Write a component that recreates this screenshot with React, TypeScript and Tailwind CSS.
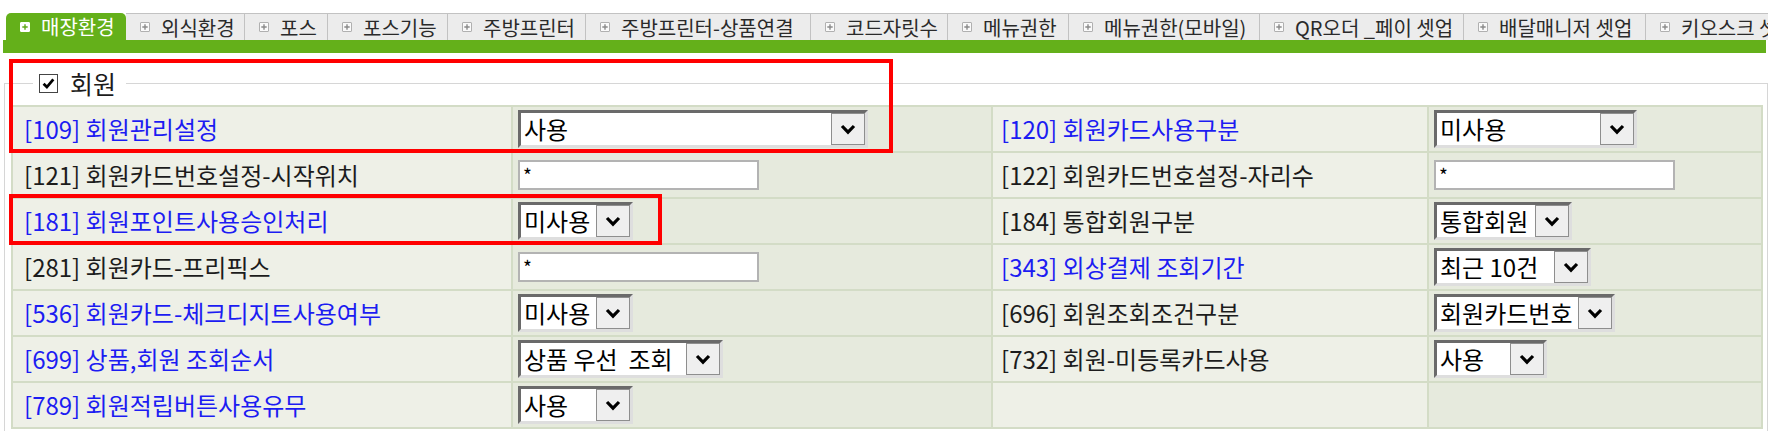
import clsx from 'clsx'

type Field =
  | { kind: 'select'; value: string; width: string }
  | { kind: 'input'; value: string }

type Setting = { code: string; label: string; link: boolean; field: Field }

const TABS: { label: string; width: string }[] = [
  { label: '매장환경', width: 'w-[120px]' },
  { label: '외식환경', width: 'w-[119px]' },
  { label: '포스', width: 'w-[83px]' },
  { label: '포스기능', width: 'w-[120px]' },
  { label: '주방프린터', width: 'w-[138px]' },
  { label: '주방프린터-상품연결', width: 'w-[225px]' },
  { label: '코드자릿수', width: 'w-[137px]' },
  { label: '메뉴권한', width: 'w-[121px]' },
  { label: '메뉴권한(모바일)', width: 'w-[191px]' },
  { label: 'QR오더 _페이 셋업', width: 'w-[204px]' },
  { label: '배달매니저 셋업', width: 'w-[182px]' },
  { label: '키오스크 셋업', width: 'w-[160px]' },
]

const ROWS: [Setting, Setting | null][] = [
  [
    { code: '109', label: '회원관리설정', link: true, field: { kind: 'select', value: '사용', width: 'w-[350px]' } },
    { code: '120', label: '회원카드사용구분', link: true, field: { kind: 'select', value: '미사용', width: 'w-[203px]' } },
  ],
  [
    { code: '121', label: '회원카드번호설정-시작위치', link: false, field: { kind: 'input', value: '*' } },
    { code: '122', label: '회원카드번호설정-자리수', link: false, field: { kind: 'input', value: '*' } },
  ],
  [
    { code: '181', label: '회원포인트사용승인처리', link: true, field: { kind: 'select', value: '미사용', width: 'w-[115px]' } },
    { code: '184', label: '통합회원구분', link: false, field: { kind: 'select', value: '통합회원', width: 'w-[138px]' } },
  ],
  [
    { code: '281', label: '회원카드-프리픽스', link: false, field: { kind: 'input', value: '*' } },
    { code: '343', label: '외상결제 조회기간', link: true, field: { kind: 'select', value: '최근 10건', width: 'w-[157px]' } },
  ],
  [
    { code: '536', label: '회원카드-체크디지트사용여부', link: true, field: { kind: 'select', value: '미사용', width: 'w-[115px]' } },
    { code: '696', label: '회원조회조건구분', link: false, field: { kind: 'select', value: '회원카드번호', width: 'w-[181px]' } },
  ],
  [
    { code: '699', label: '상품,회원 조회순서', link: true, field: { kind: 'select', value: '상품 우선  조회', width: 'w-[205px]' } },
    { code: '732', label: '회원-미등록카드사용', link: false, field: { kind: 'select', value: '사용', width: 'w-[113px]' } },
  ],
  [
    { code: '789', label: '회원적립버튼사용유무', link: true, field: { kind: 'select', value: '사용', width: 'w-[115px]' } },
    null,
  ],
]

function PlusBox({ active }: { active: boolean }) {
  return (
    <span
      className={clsx(
        'flex h-[10px] w-[10px] shrink-0 items-center justify-center rounded-[1px] border',
        active ? 'border-white bg-white' : 'border-[#b0b0b0] bg-[#fafafa]',
      )}
    >
      <svg viewBox="0 0 8 8" className="h-[8px] w-[8px]">
        <path d="M4 1.3v5.4M1.3 4h5.4" stroke={active ? '#5fa818' : '#8a8a8a'} strokeWidth="1.4" />
      </svg>
    </span>
  )
}

function Tab({ label, width, active }: { label: string; width: string; active: boolean }) {
  return (
    <div
      className={clsx(
        'flex h-[27px] shrink-0 items-center gap-[11px] pl-[14px] text-[20px] leading-[27px]',
        width,
        active
          ? 'rounded-t-[5px] bg-[#64b01a] text-white'
          : 'border-t border-r border-[#c2c2c2] bg-[#ececec] text-[#2a2a2a]',
      )}
    >
      <PlusBox active={active} />
      <span className="whitespace-pre">{label}</span>
    </div>
  )
}

function Chevron() {
  return (
    <svg viewBox="0 0 16 11" className="h-[11px] w-[16px]">
      <path d="M2 2l6 6.2L14 2" fill="none" stroke="#000" strokeWidth="3.2" />
    </svg>
  )
}

function SelectBox({ value, width }: { value: string; width: string }) {
  return (
    <div
      className={clsx(
        'flex h-[38px] items-center border-[3px] border-t-[#6a6a6a] border-r-[#dedede] border-b-[#dedede] border-l-[#6a6a6a] bg-white',
        width,
      )}
    >
      <span className="min-w-0 flex-1 pl-[3px] text-[24px] leading-[30px] whitespace-pre text-black">{value}</span>
      <span className="flex h-full w-[34px] shrink-0 items-center justify-center border border-[#8e8e8e] bg-[#efefef]">
        <Chevron />
      </span>
    </div>
  )
}

function TextBox({ value }: { value: string }) {
  return (
    <div className="h-[30px] w-[241px] border-2 border-[#b3b3b3] bg-white pl-[3px] text-[19px] leading-[26px] text-black">
      {value}
    </div>
  )
}

function LabelCell({ s, first }: { s: Setting | null; first: boolean }) {
  return (
    <td
      className={clsx(
        'h-[46px] border-2 border-[#d3dcc6] bg-[#eef0e7] align-middle text-[24px] leading-[30px] whitespace-nowrap',
        first ? 'pl-[11px]' : 'pl-[8px]',
        s?.link ? 'text-[#1c1cf2]' : 'text-[#1c1c1c]',
      )}
    >
      {s && (
        <>
          [{s.code}] {s.label}
        </>
      )}
    </td>
  )
}

function ValueCell({ s }: { s: Setting | null }) {
  return (
    <td className="h-[46px] border-2 border-[#d3dcc6] bg-[#e6eadd] pl-[5px] align-middle">
      {s && (s.field.kind === 'select' ? <SelectBox value={s.field.value} width={s.field.width} /> : <TextBox value={s.field.value} />)}
    </td>
  )
}

export default function App() {
  return (
    <div className="relative w-[1768px] overflow-hidden bg-white font-['Noto_Sans_CJK_KR',sans-serif]">
      <div className="flex overflow-hidden pt-[13px] pl-[6px]">
        {TABS.map((t, i) => (
          <Tab key={t.label} label={t.label} width={t.width} active={i === 0} />
        ))}
      </div>
      <div className="mr-[2px] ml-[3px] h-[13px] bg-[#64b01a]" />

      <fieldset className="mt-[16px] mr-[2px] ml-[4px] border border-[#d6d6d6] pr-[4px] pb-[6px] pl-[6px]">
        <legend className="ml-[22px] flex h-[28px] items-center px-[6px] pr-[10px]">
          <span className="flex h-[19px] w-[19px] items-center justify-center border border-[#444] bg-white">
            <svg viewBox="0 0 14 14" className="h-[15px] w-[15px]">
              <path d="M2.4 7.2l3.1 3.1 6-7.2" fill="none" stroke="#000" strokeWidth="2.6" />
            </svg>
          </span>
          <span className="ml-[12px] text-[25px] leading-[28px] text-[#1c1c1c]">회원</span>
        </legend>

        <table className="mt-[8px] w-[1750px] table-fixed border-collapse">
          <colgroup>
            <col className="w-[500px]" />
            <col className="w-[480px]" />
            <col className="w-[436px]" />
            <col className="w-[334px]" />
          </colgroup>
          <tbody>
            {ROWS.map(([l, r], i) => (
              <tr key={i}>
                <LabelCell s={l} first />
                <ValueCell s={l} />
                <LabelCell s={r} first={false} />
                <ValueCell s={r} />
              </tr>
            ))}
          </tbody>
        </table>
      </fieldset>

      {/* annotation boxes drawn over the screenshot */}
      <div className="pointer-events-none absolute top-[59px] left-[9px] h-[94px] w-[884px] border-4 border-[#ff0000]" />
      <div className="pointer-events-none absolute top-[194px] left-[9px] h-[51px] w-[653px] border-4 border-[#ff0000]" />
    </div>
  )
}
